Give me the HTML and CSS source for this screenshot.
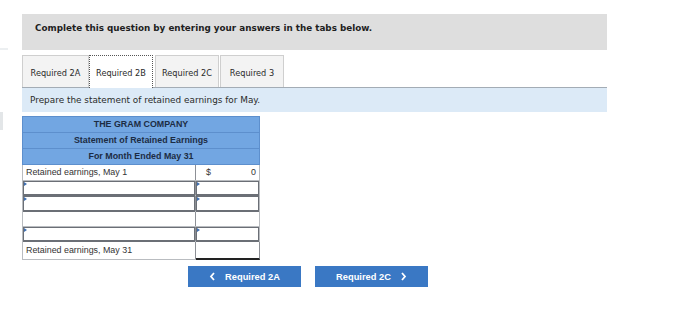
FILE: index.html
```html
<!DOCTYPE html>
<html>
<head>
<meta charset="utf-8">
<link rel="stylesheet" href="styles.css">
</head>
<body>
<div class="edge edge-top"></div>
<div class="edge edge-mid"></div>
<div class="page">
  <div class="banner">Complete this question by entering your answers in the tabs below.</div>
  <div class="tabs">
    <div class="tab t1">Required 2A</div>
    <div class="tab t2 active">Required 2B</div>
    <div class="tab t3">Required 2C</div>
    <div class="tab t4">Required 3</div>
  </div>
  <div class="prompt">Prepare the statement of retained earnings for May.</div>
  <div class="sheet">
    <div class="hrow">THE GRAM COMPANY</div>
    <div class="hrow">Statement of Retained Earnings</div>
    <div class="hrow">For Month Ended May 31</div>
    <div class="drow">
      <div class="c1 label">Retained earnings, May 1</div>
      <div class="c2 amt"><span>$</span><span>0</span></div>
    </div>
    <div class="drow short">
      <div class="c1"><div class="inp"></div></div>
      <div class="c2"><div class="inp"></div></div>
    </div>
    <div class="drow">
      <div class="c1"><div class="inp"></div></div>
      <div class="c2"><div class="inp"></div></div>
    </div>
    <div class="drow short">
      <div class="c1"></div>
      <div class="c2"></div>
    </div>
    <div class="drow short">
      <div class="c1"><div class="inp"></div></div>
      <div class="c2"><div class="inp"></div></div>
    </div>
    <div class="drow last">
      <div class="c1 label">Retained earnings, May 31</div>
      <div class="c2 total"></div>
    </div>
  </div>
  <div class="nav">
    <div class="btn">
      <svg width="7" height="9" viewBox="0 0 7 9"><path d="M5 1 L2 4.5 L5 8" fill="none" stroke="#fff" stroke-width="1.8"/></svg>
      <span>Required 2A</span>
    </div>
    <div class="btn">
      <span>Required 2C</span>
      <svg width="7" height="9" viewBox="0 0 7 9"><path d="M2 1 L5 4.5 L2 8" fill="none" stroke="#fff" stroke-width="1.8"/></svg>
    </div>
  </div>
</div>
</body>
</html>
```

FILE: styles.css
```css
html, body {
  margin: 0;
  padding: 0;
  background: #fff;
}
body {
  position: relative;
  width: 700px;
  height: 316px;
  overflow: hidden;
}
.edge {
  position: absolute;
  left: 0;
  width: 8px;
  background: #eceff1;
}
.edge-top { top: 48px; height: 2px; }
.edge-mid { top: 112px; height: 18px; width: 3px; background: #e3e6e8; }
.page {
  padding-left: 22px;
  padding-top: 14px;
  width: 585px;
}
.banner {
  height: 36px;
  box-sizing: border-box;
  background: #dedede;
  padding: 8px 0 0 13px;
  font-family: "DejaVu Sans", Verdana, sans-serif;
  font-weight: bold;
  font-size: 8.8px;
  color: #1e1e1e;
  line-height: 12px;
}
.tabs {
  display: flex;
  margin-top: 5px;
  height: 32px;
  align-items: flex-end;
}
.tab {
  box-sizing: border-box;
  height: 32px;
  background: #f3f3f3;
  border: 1px solid #cfcfcf;
  border-bottom: none;
  font-family: "DejaVu Sans", Verdana, sans-serif;
  font-size: 8.2px;
  color: #2a2a2a;
  display: flex;
  align-items: center;
  justify-content: center;
  padding-top: 2px;
}
.t1 { width: 67px; }
.t2 { width: 64px; }
.t3 { width: 64px; margin-left: 2px; }
.t4 { width: 64px; margin-left: 1px; }
.tab.active {
  background: #fff;
  border: 1px dotted #555;
  border-bottom: none;
  height: 33px;
  padding-top: 1px;
  margin-bottom: -1px;
  position: relative;
}
.prompt {
  height: 25px;
  box-sizing: border-box;
  border-top: 1px solid #a3acb5;
  background: #dceaf7;
  padding: 6px 0 0 8px;
  font-family: "DejaVu Sans", Verdana, sans-serif;
  font-size: 8.9px;
  color: #2a2a2a;
  line-height: 12px;
}
.sheet {
  margin-top: 4px;
  width: 238px;
  font-family: "Liberation Sans", Arial, sans-serif;
  font-size: 8.9px;
  color: #333;
}
.hrow {
  height: 16px;
  box-sizing: border-box;
  background: #72a6e2;
  border: 1px solid #5d8fcd;
  border-top: none;
  text-align: center;
  font-weight: bold;
  line-height: 15px;
  color: #1c2c44;
}
.hrow:first-child {
  border-top: 1px solid #5d8fcd;
  height: 17px;
}
.drow {
  display: flex;
  height: 16px;
  box-sizing: border-box;
  border-left: 1px solid #b9bcc0;
  border-bottom: 1px solid #b9bcc0;
}
.drow.short {
  height: 15px;
}
.c1 {
  width: 173px;
  box-sizing: border-box;
  border-right: 1px solid #8d9096;
  position: relative;
}
.c2 {
  width: 64px;
  box-sizing: border-box;
  border-right: 1px solid #b9bcc0;
  position: relative;
}
.label {
  padding-left: 3px;
  line-height: 15px;
}
.amt {
  display: flex;
  justify-content: space-between;
  padding: 0 3px 0 10px;
  line-height: 15px;
}
.inp {
  position: absolute;
  left: 0;
  top: 0;
  right: 0;
  bottom: -1px;
  border: 1px solid #6b6f76;
  border-width: 1px 1px 2px 1px;
  background: #fff;
}
.inp::before {
  content: "";
  position: absolute;
  left: 0;
  top: 0;
  border-left: 3px solid #3f6fb0;
  border-top: 2px solid transparent;
  border-bottom: 2px solid transparent;
}
.last {
  height: 18px;
}
.last .label {
  line-height: 16px;
}
.total {
  border-bottom: 2px solid #222;
  margin-bottom: -1px;
  border-right-color: #8d9096;
}
.nav {
  display: flex;
  gap: 14px;
  margin-top: 6px;
  padding-left: 166px;
}
.btn {
  width: 113px;
  height: 21px;
  background: #3a78c4;
  color: #fff;
  font-family: "Liberation Sans", Arial, sans-serif;
  font-weight: bold;
  font-size: 9.3px;
  display: flex;
  align-items: center;
  justify-content: center;
  gap: 9px;
}
```
